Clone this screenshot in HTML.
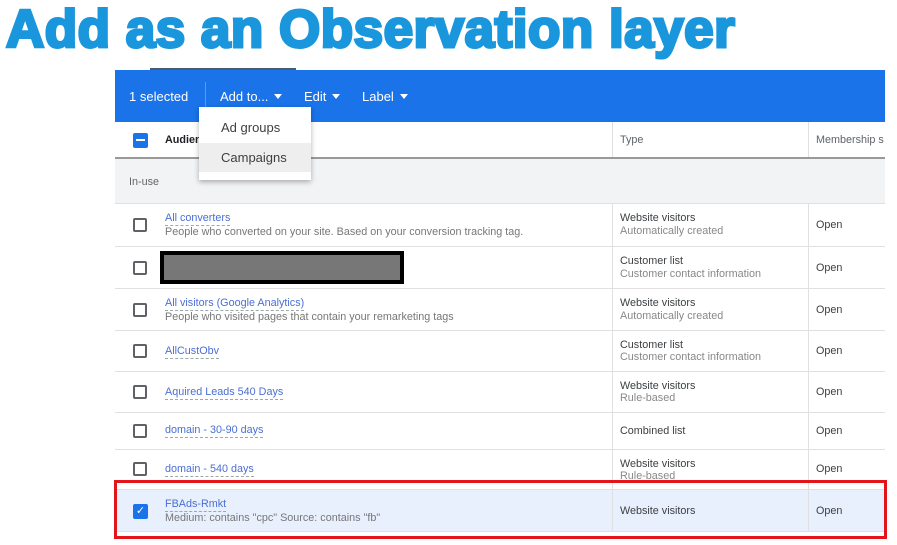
<!DOCTYPE html>
<html><head><meta charset="utf-8"><style>
*{margin:0;padding:0;box-sizing:border-box}
body{width:897px;height:545px;background:#fff;position:relative;overflow:hidden;font-family:"Liberation Sans",Arial,sans-serif}
.title{position:absolute;left:6px;top:2px;font-size:53px;font-weight:bold;color:#1a96dc;letter-spacing:0.5px;-webkit-text-stroke:3px #1a96dc;white-space:nowrap;line-height:56px}
.bar{position:absolute;left:115px;top:70px;width:770px;height:52px;background:#1a73e8;color:#fff;font-size:13px}
.bar span{position:absolute;top:19px}
.tri{display:inline-block;width:0;height:0;border-left:4px solid transparent;border-right:4px solid transparent;border-top:5px solid #fff;margin-left:6px;vertical-align:2px}
.row{position:absolute;left:115px;width:770px;border-bottom:1px solid #e0e0e0;font-size:10.8px;color:#3c4043;white-space:nowrap}
.cb{position:absolute;left:18px;width:14px;height:14px;border:2px solid #5f6368;border-radius:2px}
.vl{position:absolute;top:0;bottom:0;width:1px;background:#e0e0e0}
.nm{position:absolute;left:50px;color:#4a6fd4;border-bottom:1px dashed #9aa;line-height:13px}
.ds{position:absolute;left:50px;color:#777;line-height:13px}
.t1{position:absolute;left:505px;line-height:13px}
.t2{position:absolute;left:505px;color:#888;line-height:13px}
.op{position:absolute;left:701px}
</style></head><body>
<div class="title">Add as an Observation layer</div>
<div style="position:absolute;left:150px;top:68px;width:146px;height:2px;background:#4a5a70"></div>
<div class="bar">
<span style="left:14px">1 selected</span>
<div style="position:absolute;left:90px;top:12px;width:1px;height:28px;background:#5b9af0"></div>
<span style="left:105px">Add to...<i class="tri"></i></span>
<span style="left:189px">Edit<i class="tri"></i></span>
<span style="left:247px">Label<i class="tri"></i></span>
</div>
<div class="row" style="top:122px;height:37px;border-bottom:2px solid #999;overflow:hidden">
<div style="position:absolute;left:18px;top:11px;width:15px;height:15px;background:#1a73e8;border-radius:2px"><div style="position:absolute;left:3px;top:6px;width:9px;height:2px;background:#fff"></div></div>
<span style="position:absolute;left:50px;top:12px;font-weight:bold;color:#202124">Audience</span>
<div class="vl" style="left:497px"></div><span style="position:absolute;left:505px;top:12px;color:#5f6368">Type</span>
<div class="vl" style="left:693px"></div><span style="position:absolute;left:701px;top:12px;color:#5f6368">Membership s</span>
</div>
<div class="row" style="top:159px;height:45px;background:#f1f3f4"><span style="position:absolute;left:14px;top:17px;color:#666">In-use</span></div>

<div class="row" style="top:204px;height:43px"><div class="cb" style="top:14px"></div><div class="nm" style="top:8px">All converters</div><div class="ds" style="top:22px">People who converted on your site. Based on your conversion tracking tag.</div><div class="vl" style="left:497px"></div><div class="t1" style="top:8px">Website visitors</div><div class="t2" style="top:21px">Automatically created</div><div class="vl" style="left:693px"></div><div class="op" style="top:15px">Open</div></div>
<div class="row" style="top:247px;height:42px"><div class="cb" style="top:14px"></div><div style="position:absolute;left:45px;top:4px;width:244px;height:33px;background:#777;border:4px solid #000"></div><div class="vl" style="left:497px"></div><div class="t1" style="top:8px">Customer list</div><div class="t2" style="top:21px">Customer contact information</div><div class="vl" style="left:693px"></div><div class="op" style="top:15px">Open</div></div>
<div class="row" style="top:289px;height:42px"><div class="cb" style="top:14px"></div><div class="nm" style="top:8px">All visitors (Google Analytics)</div><div class="ds" style="top:22px">People who visited pages that contain your remarketing tags</div><div class="vl" style="left:497px"></div><div class="t1" style="top:8px">Website visitors</div><div class="t2" style="top:21px">Automatically created</div><div class="vl" style="left:693px"></div><div class="op" style="top:15px">Open</div></div>
<div class="row" style="top:331px;height:41px"><div class="cb" style="top:13px"></div><div class="nm" style="top:14px">AllCustObv</div><div class="vl" style="left:497px"></div><div class="t1" style="top:8px">Customer list</div><div class="t2" style="top:20px">Customer contact information</div><div class="vl" style="left:693px"></div><div class="op" style="top:14px">Open</div></div>
<div class="row" style="top:372px;height:41px"><div class="cb" style="top:13px"></div><div class="nm" style="top:14px">Aquired Leads 540 Days</div><div class="vl" style="left:497px"></div><div class="t1" style="top:8px">Website visitors</div><div class="t2" style="top:20px">Rule-based</div><div class="vl" style="left:693px"></div><div class="op" style="top:14px">Open</div></div>
<div class="row" style="top:413px;height:37px"><div class="cb" style="top:11px"></div><div class="nm" style="top:11px">domain - 30-90 days</div><div class="vl" style="left:497px"></div><div class="t1" style="top:12px">Combined list</div><div class="vl" style="left:693px"></div><div class="op" style="top:12px">Open</div></div>
<div class="row" style="top:450px;height:40px;overflow:hidden"><div class="cb" style="top:12px"></div><div class="nm" style="top:13px">domain - 540 days</div><div class="vl" style="left:497px"></div><div class="t1" style="top:8px">Website visitors</div><div class="t2" style="top:20px">Rule-based</div><div class="vl" style="left:693px"></div><div class="op" style="top:13px">Open</div></div>
<div class="row" style="top:490px;height:42px;background:#e8f0fe"><div style="position:absolute;left:18px;top:14px;width:15px;height:15px;background:#1a73e8;border-radius:2px;color:#fff;font-size:11px;line-height:15px;text-align:center">✓</div><div class="nm" style="top:8px">FBAds-Rmkt</div><div class="ds" style="top:22px">Medium: contains "cpc" Source: contains "fb"</div><div class="vl" style="left:497px"></div><div class="t1" style="top:15px">Website visitors</div><div class="vl" style="left:693px"></div><div class="op" style="top:15px">Open</div></div>
<div style="position:absolute;left:114px;top:480px;width:773px;height:59px;border:3px solid #e3141a"></div>

<div style="position:absolute;left:199px;top:107px;width:112px;height:73px;background:#fff;box-shadow:0 2px 5px rgba(0,0,0,.3);font-size:13px;color:#3c4043">
<div style="position:absolute;left:0;top:6px;width:112px;height:29px;line-height:29px;padding-left:22px">Ad groups</div>
<div style="position:absolute;left:0;top:36px;width:112px;height:29px;line-height:29px;padding-left:22px;background:#eeeeee">Campaigns</div>
</div>
</body></html>
